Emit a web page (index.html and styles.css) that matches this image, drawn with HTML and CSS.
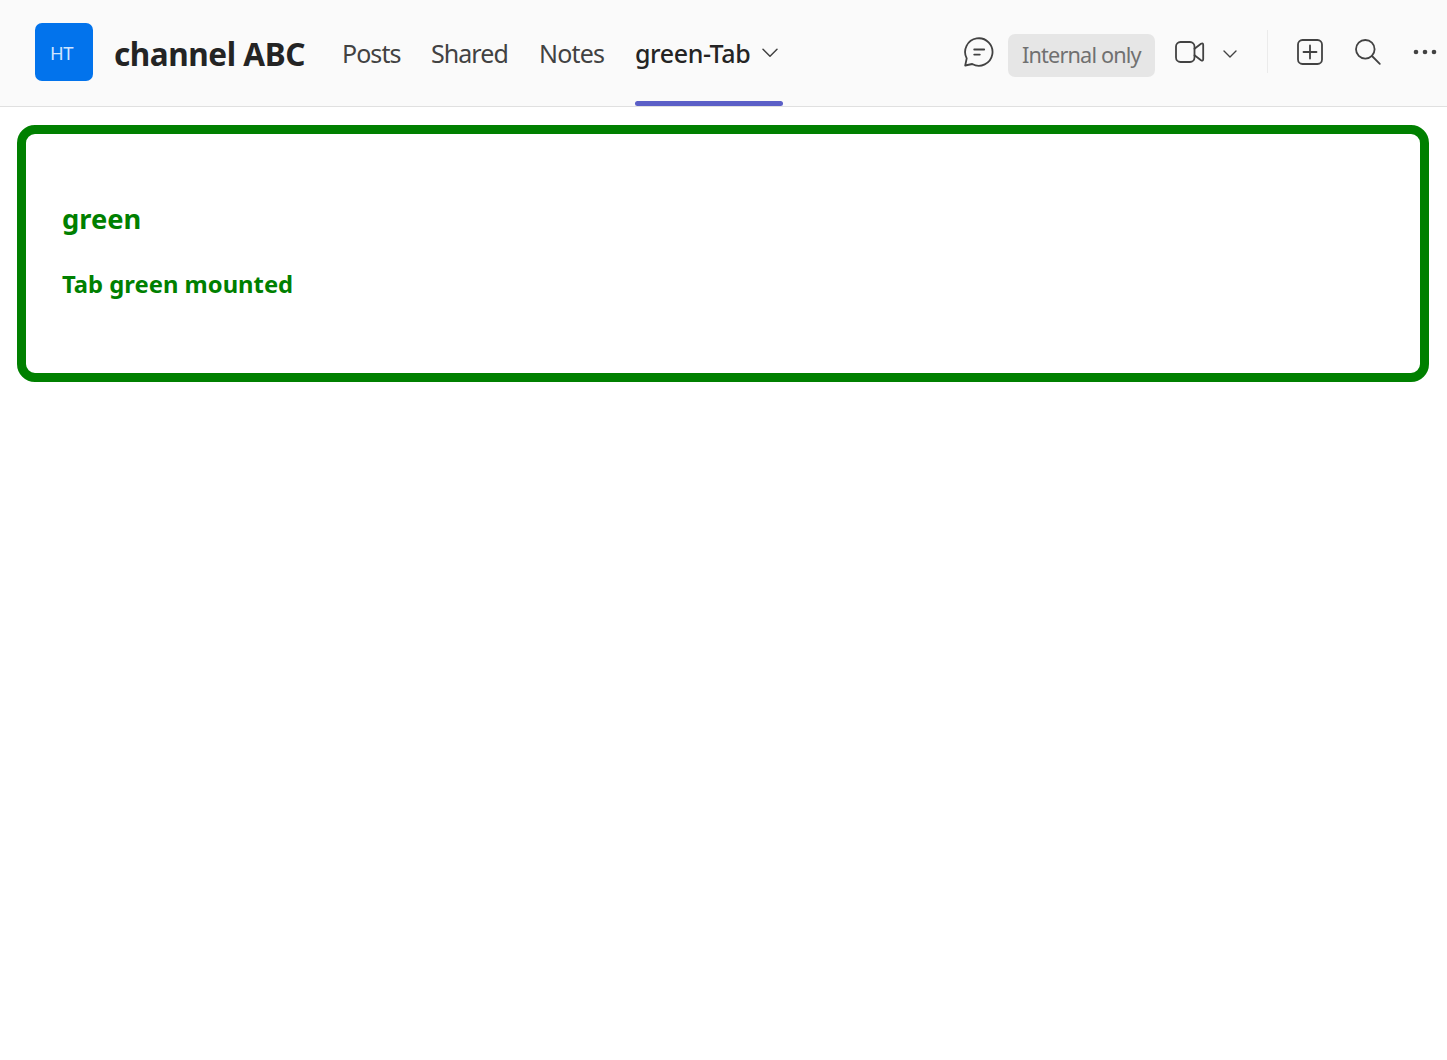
FILE: index.html
```html
<!DOCTYPE html>
<html lang="en">
<head>
<meta charset="utf-8">
<title>channel ABC</title>
<link rel="stylesheet" href="styles.css">
</head>
<body>
<header class="header">
  <div class="avatar"><span>HT</span></div>
  <h1 class="title">channel ABC</h1>
  <nav class="tabs">
    <a class="tab posts">Posts</a>
    <a class="tab shared">Shared</a>
    <a class="tab notes">Notes</a>
    <a class="tab active"><span class="active-label">green-Tab</span>
      <svg width="18" height="12" viewBox="0 0 18 12"><path d="M2 2.2 9 9.2 16 2.2"/></svg>
    </a>
  </nav>
  <div class="actions">
    <svg class="chat" width="32" height="32" viewBox="0 0 32 32"><path d="M3.7 22.4A13.7 13.7 0 1 1 9.2 28L2.2 29.5Z"/><path d="M11.2 13.5h10M11.2 18.6h5.6"/></svg>
    <span class="badge"><span>Internal only</span></span>
    <svg class="video" width="32" height="26" viewBox="0 0 32 26"><rect x="2" y="3" width="18.5" height="20" rx="4.5"/><path d="M20.5 9.8 27 4.8Q29.2 3.6 29.2 6V20Q29.2 22.4 27 21.2L20.5 16.2"/></svg>
    <svg class="video-menu" width="16" height="10" viewBox="0 0 16 10"><path d="M2 2 8 8 14 2"/></svg>
    <span class="divider"></span>
    <svg class="add" width="28" height="28" viewBox="0 0 28 28"><rect x="2" y="2" width="24" height="24" rx="4.5"/><path d="M14 7.5v13M7.5 14h13"/></svg>
    <svg class="search" width="28" height="28" viewBox="0 0 28 28"><circle cx="11.3" cy="11.3" r="9.3"/><path d="M18 18 25.8 25.8"/></svg>
    <svg class="more" width="24" height="6" viewBox="0 0 24 6"><circle cx="3" cy="3" r="2.3"/><circle cx="12" cy="3" r="2.3"/><circle cx="21" cy="3" r="2.3"/></svg>
  </div>
</header>
<main class="content">
  <section class="panel">
    <h2 class="name">green</h2>
    <h3 class="status">Tab green mounted</h3>
  </section>
</main>
</body>
</html>
```
FILE: styles.css
```css
* { box-sizing: border-box; }
body {
  margin: 0;
  background: #fff;
  font-family: "Noto Sans", "Open Sans", sans-serif;
  overflow: hidden;
}
.header {
  display: flex;
  align-items: flex-start;
  height: 107px;
  padding-left: 35px;
  background: #fafafa;
  border-bottom: 1px solid #e0e0e0;
  white-space: nowrap;
}
.header svg {
  flex: none;
  fill: none;
  stroke: #424242;
  stroke-width: 1.8;
  stroke-linecap: round;
  stroke-linejoin: round;
}
.avatar {
  width: 58px;
  height: 58px;
  margin-top: 23px;
  border-radius: 7px;
  background: #0273ec;
  color: #d0e5ff;
  font-size: 18.5px;
  font-weight: 400;
  letter-spacing: -0.4px;
  line-height: 59px;
  padding-left: 15px;
}
.title {
  width: 228px;
  margin: 24px 0 0;
  padding-left: 21px;
  color: #242424;
  font-size: 31.5px;
  font-weight: 700;
  letter-spacing: -0.45px;
  line-height: 59px;
}
.tabs {
  display: flex;
  height: 106px;
  color: #424242;
  font-size: 25px;
  letter-spacing: -0.95px;
  line-height: 106px;
}
.tab { flex: none; }
.posts { width: 110px; padding-left: 21px; }
.shared { width: 108px; }
.notes { width: 96px; letter-spacing: -0.8px; }
.active {
  display: flex;
  position: relative;
  width: 148px;
  color: #242424;
  font-weight: 500;
  letter-spacing: -0.4px;
}
.active::after {
  content: "";
  position: absolute;
  left: 0;
  bottom: 0;
  width: 148px;
  height: 5px;
  border-radius: 3px;
  background: #5b5fc7;
}
.active-label { width: 126px; }
.header .active svg { margin-top: 47px; stroke-width: 1.5; }
.actions { display: flex; flex: 1; }
.chat { margin: 36px 0 0 180px; }
.badge {
  width: 147px;
  height: 43px;
  margin: 34px 19px 0 13px;
  padding-left: 14px;
  border-radius: 7px;
  background: #e6e6e6;
  color: #707070;
  font-size: 21.7px;
  letter-spacing: -0.85px;
  line-height: 42px;
}
.video { margin-top: 39px; }
.header .video-menu { margin: 49px 0 0 16px; stroke-width: 1.4; }
.divider { width: 1px; height: 43px; margin: 30px 28px 0 29px; background: #ebebeb; }
.add { margin-top: 38px; }
.search { margin: 38px 0 0 30px; }
.header .more { margin: 49px 0 0 31px; fill: #424242; stroke: none; }
.content { padding: 18px 18px 0 17px; }
.panel {
  height: 257px;
  padding: 63px 36px 0;
  border: 9px solid #008000;
  border-radius: 18px;
  color: #008000;
}
.name, .status { margin: 0; font-weight: 700; }
.name { font-size: 27.3px; line-height: 44px; }
.status { margin-top: 23px; font-size: 23.8px; line-height: 40px; }
```
